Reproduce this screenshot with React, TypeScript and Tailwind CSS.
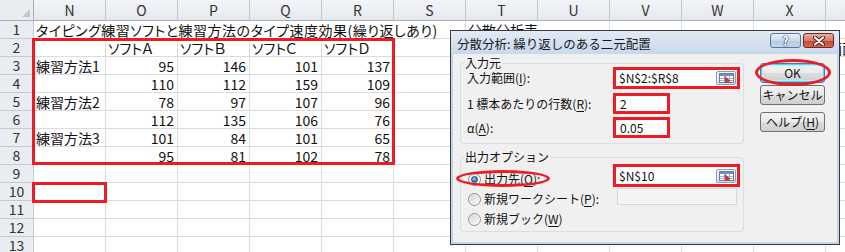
import React from "react";

const COLS = ["N", "O", "P", "Q", "R", "S", "T", "U", "V", "W", "X", "Y"];

const DATA: Record<number, string[]> = {
  2: ["", "ソフトＡ", "ソフトＢ", "ソフトＣ", "ソフトＤ"],
  3: ["練習方法1", "95", "146", "101", "137"],
  4: ["", "110", "112", "159", "109"],
  5: ["練習方法2", "78", "97", "107", "96"],
  6: ["", "112", "135", "106", "76"],
  7: ["練習方法3", "101", "84", "101", "65"],
  8: ["", "95", "81", "102", "78"],
};

const YCOL: Record<number, string> = { 2: "画面", 3: "?", 4: "?" };

function RowHead({ n }: { n: number }) {
  return (
    <div className="w-[34px] shrink-0 border-r border-b border-[#c5c9cf] bg-[#e9ecf0] text-center text-[14px] leading-[17px] text-[#333]">
      {n}
    </div>
  );
}

function Cell({ text, right }: { text?: string; right?: boolean }) {
  return (
    <div
      className={`w-[72px] shrink-0 border-r border-b border-[#dadcdd] text-[14px] leading-[18px] whitespace-nowrap text-[#111] ${
        right ? "text-right pr-[3px]" : "pl-[2px]"
      }`}
    >
      {text}
    </div>
  );
}

function Sheet() {
  const rows = [];
  rows.push(
    <div key={1} className="flex h-[18px]">
      <RowHead n={1} />
      <div className="w-[432px] shrink-0 border-r border-b border-[#dadcdd] pl-[2px] text-[14px] leading-[18px] tracking-[0.5px] whitespace-nowrap text-[#111]">
        タイピング練習ソフトと練習方法のタイプ速度効果(繰り返しあり)
      </div>
      <div className="w-[144px] shrink-0 border-r border-b border-[#dadcdd] pl-[2px] text-[14px] leading-[18px] whitespace-nowrap text-[#111]">
        分散分析表
      </div>
      {COLS.slice(8).map((c) => (
        <Cell key={c} />
      ))}
    </div>
  );
  for (let r = 2; r <= 13; r++) {
    const d = DATA[r];
    rows.push(
      <div key={r} className="flex h-[18px]">
        <RowHead n={r} />
        {COLS.map((c, i) => {
          if (d && i < 5) {
            const t = d[i];
            const isNum = /^\d+$/.test(t);
            return <Cell key={c} text={t} right={isNum} />;
          }
          if (c === "Y" && YCOL[r]) return <Cell key={c} text={YCOL[r]} />;
          return <Cell key={c} />;
        })}
      </div>
    );
  }
  return (
    <div className="flex flex-col [font-feature-settings:'palt']">
      <div className="flex h-[21px]">
        <div className="w-[34px] shrink-0 border-r border-b border-[#a9aeb5] bg-[#e9ecf0] flex items-end justify-end pr-[3px] pb-[3px]">
          <svg width="8" height="8" viewBox="0 0 8 8">
            <path d="M8 0 L8 8 L0 8 Z" fill="#c2c6cc" />
          </svg>
        </div>
        {COLS.map((c) => (
          <div
            key={c}
            className="w-[72px] shrink-0 border-r border-b border-r-[#c5c9cf] border-b-[#a9aeb5] bg-[linear-gradient(#f3f5f8,#e4e8ed)] text-center text-[14px] leading-[20px] text-[#333]"
          >
            {c}
          </div>
        ))}
      </div>
      {rows}
    </div>
  );
}

function RefButton() {
  return (
    <div className="ml-auto mr-[1px] w-[20px] h-[14px] rounded-[2px] border border-[#8d9aab] bg-[linear-gradient(#fafafa,#dcdfe4)] flex items-center justify-center">
      <svg width="15" height="10" viewBox="0 0 15 10">
        <rect x="0.5" y="0.5" width="14" height="9" fill="#ffffff" stroke="#5d7fab" />
        <rect x="1" y="1" width="13" height="2" fill="#6f92c2" />
        <line x1="1" y1="5.5" x2="14" y2="5.5" stroke="#9fb3cf" />
        <line x1="1" y1="7.5" x2="14" y2="7.5" stroke="#9fb3cf" />
        <line x1="5.5" y1="3" x2="5.5" y2="9" stroke="#9fb3cf" />
        <line x1="10.5" y1="3" x2="10.5" y2="9" stroke="#9fb3cf" />
        <path d="M6 3.5 L11 8 L9 8 L10 9.5 L8.8 9.8 L7.8 8.4 L6.3 9.6 Z" fill="#d9342b" stroke="#9b1c16" strokeWidth="0.5" />
      </svg>
    </div>
  );
}

function Radio({ checked }: { checked?: boolean }) {
  return (
    <div className="w-[13px] h-[13px] shrink-0 rounded-full border border-[#8a8f96] bg-[linear-gradient(135deg,#e6e6e6,#ffffff)] flex items-center justify-center">
      {checked ? (
        <div className="w-[7px] h-[7px] rounded-full bg-[radial-gradient(circle_at_40%_35%,#8fd6ff,#2a8ad0_55%,#154f7e)] border border-[#1c4e7a]" />
      ) : (
        <div className="w-[9px] h-[9px] rounded-full bg-[linear-gradient(135deg,#d6d6d6,#f7f7f7)]" />
      )}
    </div>
  );
}

const RED = "border-[#ed1c24]";

function U({ c }: { c: string }) {
  return <span className="underline underline-offset-[2px]">{c}</span>;
}

function WinButton({ children, def }: { children: React.ReactNode; def?: boolean }) {
  return (
    <div
      className={`w-[65px] h-[20px] rounded-[3px] border flex items-center justify-center text-[12px] leading-[14px] text-[#111] bg-[linear-gradient(#f2f2f2,#ebebeb_50%,#dddddd_50%,#cfcfcf)] ${
        def ? "border-[#3c7fb1] shadow-[inset_0_0_0_1px_#48d8fb,inset_0_0_0_2px_#c3ecfb]" : "border-[#707070]"
      }`}
    >
      {children}
    </div>
  );
}

function Dialog() {
  return (
    <div className="absolute left-[450px] top-[30px] w-[390px] h-[215px] border border-[#3a3a3a] bg-[#c4d5ea] flex flex-col text-[12px] text-[#111]">
      <div className="h-[23px] shrink-0 flex items-start bg-[linear-gradient(#e2ebf6,#c8d8ec)]">
        <span className="pl-[6px] pt-[5px] leading-[16px] text-[12.5px] text-[#1a1a1a] whitespace-nowrap">
          分散分析: 繰り返しのある二元配置
        </span>
        <div className="ml-auto flex gap-[2px] pt-[2px] pr-[5px]">
          <div className="w-[31px] h-[15px] rounded-[3px] border border-[#56739a] bg-[linear-gradient(#eaf1f9,#c9d9ec_50%,#b3c9e4_50%,#c4d6ec)] flex items-center justify-center">
            <span className="font-bold text-[13px] leading-[13px] text-white [text-shadow:0_0_1px_#1c3556,0_0_1px_#1c3556,0_0_1px_#1c3556]">
              ?
            </span>
          </div>
          <div className="w-[31px] h-[15px] rounded-[3px] border border-[#6b2a20] bg-[linear-gradient(#eab0a3,#d77a66_50%,#c5472f_50%,#d8664d)] flex items-center justify-center">
            <svg width="12" height="10" viewBox="0 0 12 10">
              <path d="M2 1.5 L10 8.5 M10 1.5 L2 8.5" stroke="#4a1a12" strokeWidth="4" strokeLinecap="round" />
              <path d="M2 1.5 L10 8.5 M10 1.5 L2 8.5" stroke="#ffffff" strokeWidth="2.2" strokeLinecap="round" />
            </svg>
          </div>
        </div>
      </div>
      <div className="mx-[2px] mb-[2px] flex-1 bg-[#f0f0f0] flex pl-[7px]">
        <div className="w-[284px] shrink-0 flex flex-col">
          <div className="relative mt-[9px] border border-[#d5dfe5] rounded-[3px] pt-[3px] pb-[5px] flex flex-col">
            <span className="absolute -top-[8px] left-[3px] px-[1px] bg-[#f0f0f0] leading-[14px]">入力元</span>
            <div className="flex items-center h-[22px]">
              <div className="w-[152px] pl-[6px] leading-[14px] whitespace-nowrap">
                入力範囲(<U c="I" />):
              </div>
              <div className={`w-[127px] h-[22px] border-[3px] ${RED} bg-white flex items-center`}>
                <span className="pl-[3px] leading-[14px]">$N$2:$R$8</span>
                <RefButton />
              </div>
            </div>
            <div className="flex items-center h-[21px] mt-[4px]">
              <div className="w-[152px] pl-[6px] leading-[14px] whitespace-nowrap">
                1 標本あたりの行数(<U c="R" />):
              </div>
              <div className={`w-[57px] h-[21px] border-[3px] ${RED} bg-white flex items-center`}>
                <span className="pl-[4px] leading-[14px]">2</span>
              </div>
            </div>
            <div className="flex items-center h-[21px] mt-[3px]">
              <div className="w-[152px] pl-[6px] leading-[14px] whitespace-nowrap">
                α(<U c="A" />):
              </div>
              <div className={`w-[57px] h-[21px] border-[3px] ${RED} bg-white flex items-center`}>
                <span className="pl-[4px] leading-[14px]">0.05</span>
              </div>
            </div>
          </div>
          <div className="relative mt-[13px] border border-[#d5dfe5] rounded-[3px] flex">
            <span className="absolute -top-[8px] left-[3px] px-[1px] bg-[#f0f0f0] leading-[14px]">出力オプション</span>
            <div className="w-[152px] shrink-0 pt-[11px] pb-[2px] flex flex-col">
              <div className="relative h-[20px] flex items-center pl-[7px] gap-[3px]">
                <Radio checked />
                <span className="leading-[14px] whitespace-nowrap">
                  出力先(<U c="O" />):
                </span>
                <div className={`absolute -left-[5px] top-[1px] w-[94px] h-[17px] rounded-[50%] border-[3px] ${RED}`} />
              </div>
              <div className="h-[20px] flex items-center pl-[7px] gap-[3px]">
                <Radio />
                <span className="leading-[14px] whitespace-nowrap">
                  新規ワークシート(<U c="P" />):
                </span>
              </div>
              <div className="h-[20px] flex items-center pl-[7px] gap-[3px]">
                <Radio />
                <span className="leading-[14px] whitespace-nowrap">
                  新規ブック(<U c="W" />)
                </span>
              </div>
            </div>
            <div className="pt-[6px] flex flex-col">
              <div className={`w-[127px] h-[23px] border-[3px] ${RED} bg-white flex items-center`}>
                <span className="pl-[3px] leading-[14px]">$N$10</span>
                <RefButton />
              </div>
              <div className="ml-[4px] mt-[1px] w-[120px] h-[17px] border border-[#d4d7db] bg-[#f4f4f4]" />
            </div>
          </div>
        </div>
        <div className="ml-[16px] pt-[9px] flex flex-col">
          <div className="relative">
            <WinButton def>OK</WinButton>
            <div className={`absolute -left-[5px] -top-[4px] w-[76px] h-[27px] rounded-[50%] border-[3px] ${RED}`} />
          </div>
          <div className="mt-[2px]">
            <WinButton>キャンセル</WinButton>
          </div>
          <div className="mt-[7px]">
            <WinButton>
              ヘルプ(<U c="H" />)
            </WinButton>
          </div>
        </div>
      </div>
    </div>
  );
}

export default function App() {
  return (
    <div className="relative w-[845px] h-[252px] overflow-hidden bg-white font-['Noto_Sans_CJK_JP','Noto_Sans',sans-serif]">
      <Sheet />
      <div className={`absolute left-[32px] top-[38px] w-[363px] h-[127px] border-[3px] ${RED}`} />
      <div className={`absolute left-[32px] top-[182px] w-[75px] h-[21px] border-[3px] ${RED}`} />
      <Dialog />
    </div>
  );
}
